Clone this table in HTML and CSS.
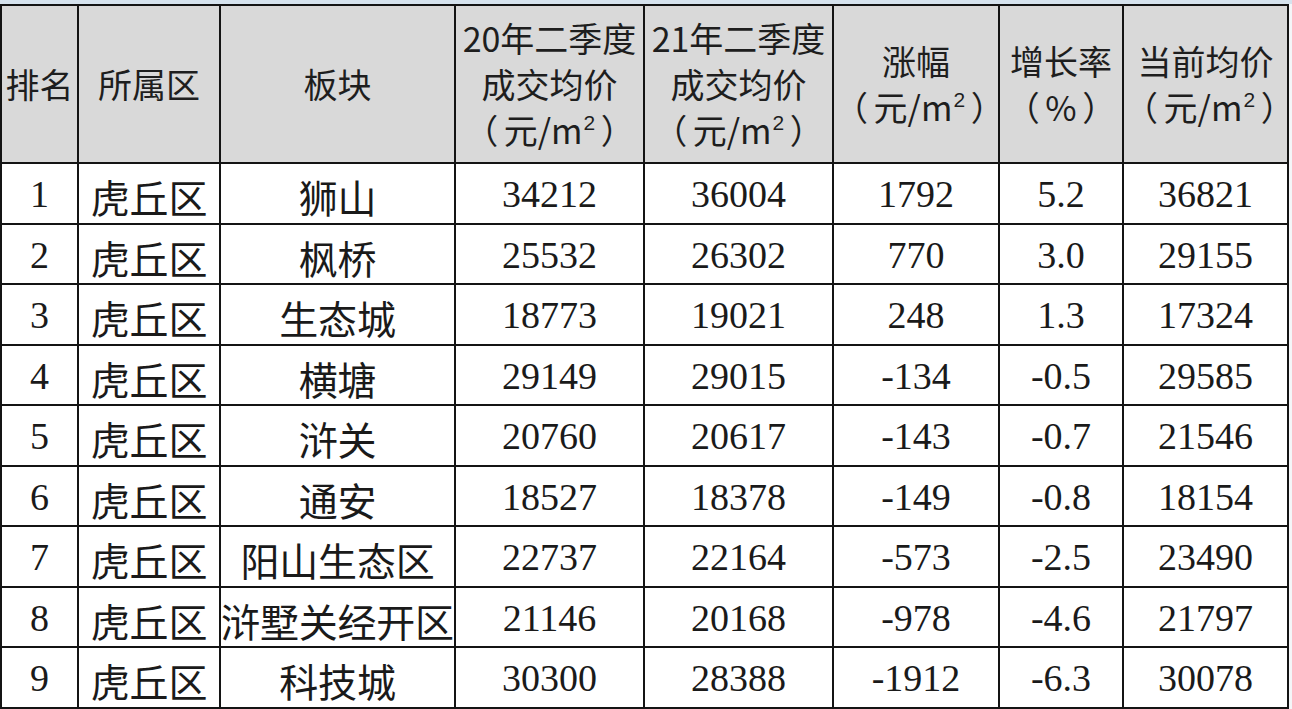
FILE: index.html
```html
<!DOCTYPE html>
<html lang="zh-CN">
<head>
<meta charset="utf-8">
<title>虎丘区板块成交均价</title>
<link rel="stylesheet" href="styles.css">
</head>
<body>
<div class="frame">
<table class="price-table">
  <colgroup>
    <col class="c-rank"><col class="c-dist"><col class="c-area"><col class="c-p20"><col class="c-p21"><col class="c-diff"><col class="c-rate"><col class="c-now">
  </colgroup>
  <thead>
    <tr>
      <th>排名</th>
      <th>所属区</th>
      <th>板块</th>
      <th>20年二季度<br>成交均价<br>（ 元/m<span class="sq">2</span> ）</th>
      <th>21年二季度<br>成交均价<br>（ 元/m<span class="sq">2</span> ）</th>
      <th>涨幅<br>（ 元/m<span class="sq">2</span> ）</th>
      <th>增长率<br>（ % ）</th>
      <th>当前均价<br>（ 元/m<span class="sq">2</span> ）</th>
    </tr>
  </thead>
  <tbody>
    <tr><td class="num">1</td><td class="zh">虎丘区</td><td class="zh">狮山</td><td class="num">34212</td><td class="num">36004</td><td class="num">1792</td><td class="num">5.2</td><td class="num">36821</td></tr>
    <tr><td class="num">2</td><td class="zh">虎丘区</td><td class="zh">枫桥</td><td class="num">25532</td><td class="num">26302</td><td class="num">770</td><td class="num">3.0</td><td class="num">29155</td></tr>
    <tr><td class="num">3</td><td class="zh">虎丘区</td><td class="zh">生态城</td><td class="num">18773</td><td class="num">19021</td><td class="num">248</td><td class="num">1.3</td><td class="num">17324</td></tr>
    <tr><td class="num">4</td><td class="zh">虎丘区</td><td class="zh">横塘</td><td class="num">29149</td><td class="num">29015</td><td class="num">-134</td><td class="num">-0.5</td><td class="num">29585</td></tr>
    <tr><td class="num">5</td><td class="zh">虎丘区</td><td class="zh">浒关</td><td class="num">20760</td><td class="num">20617</td><td class="num">-143</td><td class="num">-0.7</td><td class="num">21546</td></tr>
    <tr><td class="num">6</td><td class="zh">虎丘区</td><td class="zh">通安</td><td class="num">18527</td><td class="num">18378</td><td class="num">-149</td><td class="num">-0.8</td><td class="num">18154</td></tr>
    <tr><td class="num">7</td><td class="zh">虎丘区</td><td class="zh">阳山生态区</td><td class="num">22737</td><td class="num">22164</td><td class="num">-573</td><td class="num">-2.5</td><td class="num">23490</td></tr>
    <tr><td class="num">8</td><td class="zh">虎丘区</td><td class="zh">浒墅关经开区</td><td class="num">21146</td><td class="num">20168</td><td class="num">-978</td><td class="num">-4.6</td><td class="num">21797</td></tr>
    <tr><td class="num">9</td><td class="zh">虎丘区</td><td class="zh">科技城</td><td class="num">30300</td><td class="num">28388</td><td class="num">-1912</td><td class="num">-6.3</td><td class="num">30078</td></tr>
  </tbody>
</table>
</div>
</body>
</html>
```
FILE: styles.css
```css
html, body {
  margin: 0;
  padding: 0;
  background: #ffffff;
}
.frame {
  width: 1292px;
  height: 709px;
  overflow: hidden;
  background: #f4f6f8;
  padding-top: 4px;
  box-sizing: border-box;
  background-image: linear-gradient(#d6e3ee, #d6e3ee);
  background-size: 100% 4px;
  background-repeat: no-repeat;
}
.price-table {
  border-collapse: collapse;
  table-layout: fixed;
  width: 1289px;
  color: #1a1a1a;
}
.c-rank { width: 77px; }
.c-dist { width: 142px; }
.c-area { width: 235px; }
.c-p20 { width: 189px; }
.c-p21 { width: 189px; }
.c-diff { width: 166px; }
.c-rate { width: 124px; }
.c-now { width: 165px; }
.price-table th,
.price-table td {
  border: 2px solid #141414;
  padding: 0;
  text-align: center;
  vertical-align: middle;
  white-space: nowrap;
}
.price-table td {
  overflow: hidden;
}
.price-table thead tr {
  height: 158px;
}
.price-table th {
  background: #d9d9d9;
  font-family: "Noto Sans CJK SC", "Noto Sans", sans-serif;
  font-weight: normal;
  font-size: 34px;
  line-height: 46px;
  color: #1e1e1e;
  word-spacing: -2px;
}
.price-table th .sq {
  display: inline-block;
  font-family: "Liberation Sans", Arial, sans-serif;
  font-size: 21px;
  line-height: 21px;
  vertical-align: 14px;
  margin-left: 1px;
}
.price-table tbody tr {
  height: 60.5px;
}
.price-table td {
  background: #ffffff;
  line-height: 40px;
}
.price-table td.num {
  font-family: "Liberation Serif", "Times New Roman", serif;
  font-size: 38px;
  padding-top: 2px;
}
.price-table td.zh {
  font-family: "Noto Sans CJK SC", sans-serif;
  font-size: 39px;
  padding-top: 6px;
  letter-spacing: -0.2px;
}
```
